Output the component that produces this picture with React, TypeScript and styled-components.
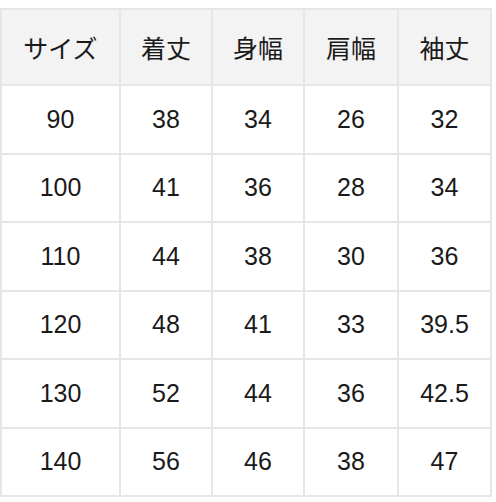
import React from "react";
import styled, { createGlobalStyle } from "styled-components";

const Global = createGlobalStyle`
  html, body { margin: 0; padding: 0; background: #ffffff; }
  body { padding-top: 8px; font-family: "Liberation Sans", "Noto Sans CJK JP", sans-serif; }
`;

const Table = styled.table`
  border-collapse: collapse;
  table-layout: fixed;
  width: 490px;
  color: #1a1a1a;
  font-size: 25px;
`;

const Col = styled.col<{ $w: number }>`
  width: ${(p) => p.$w}px;
`;

const Th = styled.th`
  background: #f3f3f3;
  border: 2px solid #e6e6e6;
  height: 74px;
  padding: 0;
  font-weight: normal;
  text-align: center;
  vertical-align: middle;
`;

const Td = styled.td`
  border: 2px solid #e6e6e6;
  height: 66.5px;
  padding: 0;
  text-align: center;
  vertical-align: middle;
`;

const headers = ["サイズ", "着丈", "身幅", "肩幅", "袖丈"];
const rows = [
  ["90", "38", "34", "26", "32"],
  ["100", "41", "36", "28", "34"],
  ["110", "44", "38", "30", "36"],
  ["120", "48", "41", "33", "39.5"],
  ["130", "52", "44", "36", "42.5"],
  ["140", "56", "46", "38", "47"],
];
const widths = [119, 92, 92, 94, 93];

export default function App() {
  return (
    <>
      <Global />
      <Table>
        <colgroup>
          {widths.map((w, i) => (
            <Col key={i} $w={w} />
          ))}
        </colgroup>
        <thead>
          <tr>
            {headers.map((h) => (
              <Th key={h}>{h}</Th>
            ))}
          </tr>
        </thead>
        <tbody>
          {rows.map((r) => (
            <tr key={r[0]}>
              {r.map((c, i) => (
                <Td key={i}>{c}</Td>
              ))}
            </tr>
          ))}
        </tbody>
      </Table>
    </>
  );
}
